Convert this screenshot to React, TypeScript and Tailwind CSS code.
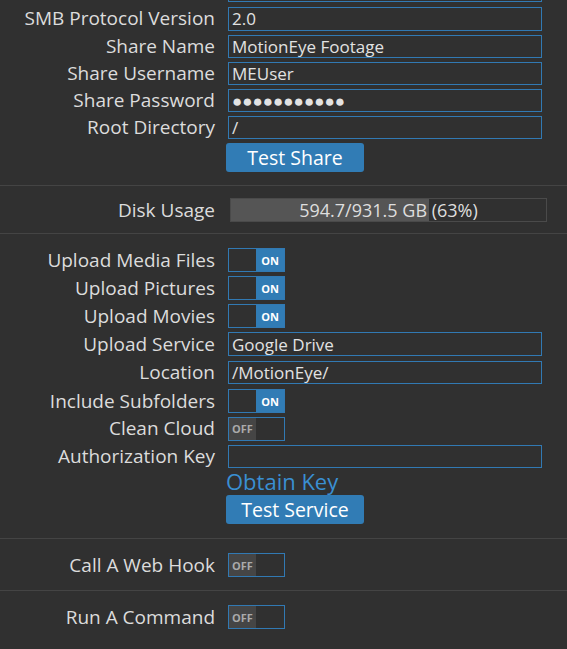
import React from "react";

const FONT = { fontFamily: '"Open Sans", "Noto Sans", sans-serif' };

function Label({ children }: { children: React.ReactNode }) {
  return (
    <div className="w-[215px] shrink-0 pr-0 text-right text-[19px] leading-none text-[#dcdcdc] whitespace-nowrap">
      {children}
    </div>
  );
}

function TextInput({ value, tall }: { value: string; tall?: boolean }) {
  return (
    <div
      className={`ml-[13px] w-[314px] ${tall ? "h-[24px]" : "h-[23px]"} border border-[#3179b3] bg-[#303030] px-[3px] flex items-center text-[17px] leading-none text-[#e2e2e2] whitespace-nowrap overflow-hidden`}
    >
      {value}
    </div>
  );
}

function Toggle({ on }: { on: boolean }) {
  return (
    <div className="ml-[13px] w-[57px] h-[24px] border border-[#3179b3] flex overflow-hidden">
      {on ? (
        <>
          <div className="w-[27px] bg-[#303030]" />
          <div className="flex-1 bg-[#317cb5] flex items-center justify-center text-[11px] font-bold text-white leading-none">
            ON
          </div>
        </>
      ) : (
        <>
          <div className="w-[27px] bg-[#454545] flex items-center justify-center text-[11px] font-bold text-[#aaaaaa] leading-none">
            OFF
          </div>
          <div className="flex-1 bg-[#303030]" />
        </>
      )}
    </div>
  );
}

function Row({ label, children, h = "h-[27px]" }: { label: string; children: React.ReactNode; h?: string }) {
  return (
    <div className={`flex items-center ${h}`}>
      <Label>{label}</Label>
      {children}
    </div>
  );
}

function Button({ children }: { children: React.ReactNode }) {
  return (
    <div className="ml-[226px] w-[138px] h-[29px] rounded-[3px] bg-[#317cb5] flex items-center justify-center text-[19.5px] leading-none text-white">
      {children}
    </div>
  );
}

export default function App() {
  return (
    <div className="w-[567px] h-[649px] overflow-hidden bg-[#303030]" style={FONT}>
      {/* Section 1 */}
      <div className="border-b border-[#444444] pb-[13px]">
        <div className="-mt-[23px] flex items-center h-[27px]">
          <div className="w-[215px] shrink-0" />
          <TextInput value="" />
        </div>
        <Row label="SMB Protocol Version" h="h-[29px]">
          <TextInput value="2.0" tall />
        </Row>
        <Row label="Share Name">
          <TextInput value="MotionEye Footage" />
        </Row>
        <Row label="Share Username">
          <TextInput value="MEUser" />
        </Row>
        <Row label="Share Password">
          <TextInput value="●●●●●●●●●●●" />
        </Row>
        <Row label="Root Directory">
          <TextInput value="/" />
        </Row>
        <div className="mt-[2px]">
          <Button>Test Share</Button>
        </div>
      </div>

      {/* Section 2 */}
      <div className="border-b border-[#444444] pt-[12px] pb-[11px]">
        <div className="flex items-center h-[24px]">
          <Label>Disk Usage</Label>
          <div className="relative ml-[15px] w-[317px] h-[24px] border border-[#4a4a4a] bg-[#303030]">
            <div className="absolute left-0 top-0 bottom-0 w-[63%] bg-[#555555]" />
            <div className="absolute inset-0 flex items-center justify-center text-[18px] leading-none text-[#dedede]">
              594.7/931.5 GB (63%)
            </div>
          </div>
        </div>
      </div>

      {/* Section 3 */}
      <div className="border-b border-[#444444] pt-[12px] pb-[14px]">
        <Row label="Upload Media Files" h="h-[28px]">
          <Toggle on />
        </Row>
        <Row label="Upload Pictures" h="h-[28px]">
          <Toggle on />
        </Row>
        <Row label="Upload Movies" h="h-[28px]">
          <Toggle on />
        </Row>
        <Row label="Upload Service" h="h-[28px]">
          <TextInput value="Google Drive" tall />
        </Row>
        <Row label="Location" h="h-[29px]">
          <TextInput value="/MotionEye/" />
        </Row>
        <Row label="Include Subfolders" h="h-[28px]">
          <Toggle on />
        </Row>
        <Row label="Clean Cloud" h="h-[27px]">
          <Toggle on={false} />
        </Row>
        <Row label="Authorization Key" h="h-[28px]">
          <TextInput value="" />
        </Row>
        <div className="ml-[226px] h-[25px] flex items-start text-[22px] leading-none text-[#3a8fd2]">
          Obtain Key
        </div>
        <div>
          <Button>Test Service</Button>
        </div>
      </div>

      {/* Section 4 */}
      <div className="border-b border-[#444444] pt-[14px] pb-[13px]">
        <div className="flex items-center h-[24px]">
          <Label>Call A Web Hook</Label>
          <Toggle on={false} />
        </div>
      </div>

      {/* Section 5 */}
      <div className="pt-[14px]">
        <div className="flex items-center h-[24px]">
          <Label>Run A Command</Label>
          <Toggle on={false} />
        </div>
      </div>
    </div>
  );
}
